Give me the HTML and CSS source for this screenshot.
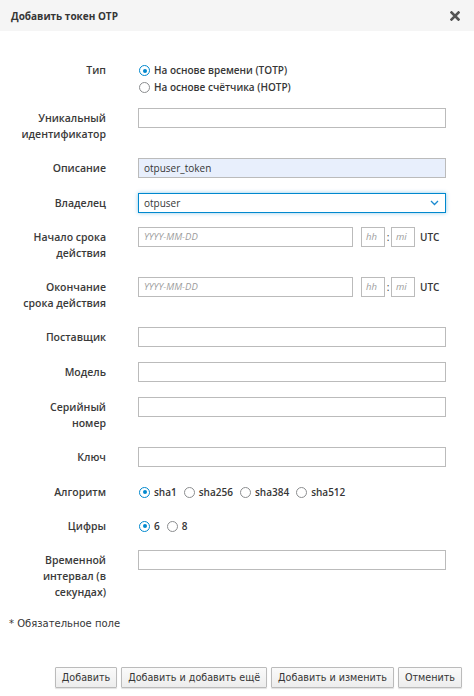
FILE: index.html
```html
<!DOCTYPE html>
<html lang="ru">
<head>
<meta charset="utf-8">
<title>Добавить токен OTP</title>
<link rel="stylesheet" href="styles.css">
</head>
<body>
<div class="dialog">
  <div class="header">
    <span class="title">Добавить токен OTP</span>
    <svg class="close" width="10" height="10" viewBox="0 0 10 10"><path d="M1.5 1.5 L8.5 8.5 M8.5 1.5 L1.5 8.5" stroke="#555" stroke-width="2.6" stroke-linecap="square"/></svg>
  </div>
  <div class="form">
    <div class="row row-type">
      <div class="label">Тип</div>
      <div class="radios-stack">
        <div class="radio-item"><span class="radio checked"></span>На основе времени (TOTP)</div>
        <div class="radio-item"><span class="radio"></span>На основе счётчика (HOTP)</div>
      </div>
    </div>
    <div class="row">
      <div class="label">Уникальный<br>идентификатор</div>
      <div class="control"><div class="input"></div></div>
    </div>
    <div class="row">
      <div class="label">Описание</div>
      <div class="control"><div class="input filled">otpuser_token</div></div>
    </div>
    <div class="row row-tight">
      <div class="label">Владелец</div>
      <div class="control">
        <div class="input select">otpuser
          <svg class="chev" width="9" height="6" viewBox="0 0 9 6"><path d="M1 1 L4.5 4.5 L8 1" fill="none" stroke="#1a8ad0" stroke-width="1.3"/></svg>
        </div>
      </div>
    </div>
    <div class="row">
      <div class="label">Начало срока<br>действия</div>
      <div class="control date-row">
        <div class="input date placeholder">YYYY-MM-DD</div>
        <div class="input time placeholder">hh</div>
        <span class="colon">:</span>
        <div class="input time placeholder">mi</div>
        <span class="utc">UTC</span>
      </div>
    </div>
    <div class="row">
      <div class="label">Окончание<br>срока действия</div>
      <div class="control date-row">
        <div class="input date placeholder">YYYY-MM-DD</div>
        <div class="input time placeholder">hh</div>
        <span class="colon">:</span>
        <div class="input time placeholder">mi</div>
        <span class="utc">UTC</span>
      </div>
    </div>
    <div class="row">
      <div class="label">Поставщик</div>
      <div class="control"><div class="input"></div></div>
    </div>
    <div class="row">
      <div class="label">Модель</div>
      <div class="control"><div class="input"></div></div>
    </div>
    <div class="row">
      <div class="label">Серийный<br>номер</div>
      <div class="control"><div class="input"></div></div>
    </div>
    <div class="row">
      <div class="label">Ключ</div>
      <div class="control"><div class="input"></div></div>
    </div>
    <div class="row row-tight">
      <div class="label">Алгоритм</div>
      <div class="radios-inline">
        <div class="radio-item"><span class="radio checked"></span>sha1</div>
        <div class="radio-item"><span class="radio"></span>sha256</div>
        <div class="radio-item"><span class="radio"></span>sha384</div>
        <div class="radio-item"><span class="radio"></span>sha512</div>
      </div>
    </div>
    <div class="row row-tight">
      <div class="label">Цифры</div>
      <div class="radios-inline">
        <div class="radio-item"><span class="radio checked"></span>6</div>
        <div class="radio-item"><span class="radio"></span>8</div>
      </div>
    </div>
    <div class="row row-last">
      <div class="label">Временной<br>интервал (в<br>секундах)</div>
      <div class="control"><div class="input"></div></div>
    </div>
  </div>
  <div class="required">* Обязательное поле</div>
  <div class="buttons">
    <button class="btn">Добавить</button>
    <button class="btn">Добавить и добавить ещё</button>
    <button class="btn">Добавить и изменить</button>
    <button class="btn">Отменить</button>
  </div>
</div>
</body>
</html>
```

FILE: styles.css
```css
html, body {
  margin: 0;
  padding: 0;
  background: #fff;
}

body {
  font-family: "Open Sans", "DejaVu Sans", sans-serif;
  color: #363636;
  width: 474px;
  height: 696px;
  overflow: hidden;
}

.header {
  height: 31px;
  background: #f5f5f5;
  display: flex;
  align-items: center;
  justify-content: space-between;
  padding: 0 14px 0 11px;
}

.title {
  font-weight: 700;
  font-size: 10px;
  color: #363636;
  margin-top: 1px;
}

.close {
  display: block;
  margin-top: 1px;
}

.form {
  padding-top: 29px;
}

.row {
  display: grid;
  grid-template-columns: 106px 308px;
  column-gap: 32px;
  margin-bottom: 15px;
  align-items: start;
}

.row-type {
  margin-bottom: 12px;
}

.row-tight {
  margin-bottom: 14px;
}

.row-last {
  margin-bottom: 0;
}

.label {
  text-align: right;
  font-weight: 600;
  font-size: 10.5px;
  line-height: 16px;
  padding-top: 2px;
  padding-bottom: 1px;
  white-space: nowrap;
  color: #3a3a3a;
}

.control {
  min-width: 0;
}

.input {
  box-sizing: border-box;
  height: 20px;
  border: 1px solid #bbb;
  background: #fff;
  font-size: 10px;
  line-height: 18px;
  padding: 0 5px;
  color: #363636;
}

.input.filled {
  background: #e8effc;
}

.input.select {
  position: relative;
  border-color: #0088ce;
  box-shadow: 0 0 4px rgba(0, 136, 206, 0.45);
}

.chev {
  position: absolute;
  right: 6px;
  top: 6px;
}

.date-row {
  display: flex;
  align-items: center;
}

.input.date {
  width: 215px;
  margin-right: 8px;
}

.input.time {
  width: 24px;
  padding: 0 4px;
}

.placeholder {
  color: #9c9c9c;
  font-style: italic;
  font-size: 9.5px;
}

.colon {
  font-size: 10px;
  width: 6px;
  text-align: center;
}

.utc {
  font-weight: 600;
  font-size: 10px;
  margin-left: 5px;
}

.radios-stack {
  padding-top: 2px;
}

.radio-item {
  display: flex;
  align-items: center;
  font-weight: 600;
  font-size: 10px;
  line-height: 17px;
}

.radios-inline {
  display: flex;
  align-items: center;
  height: 20px;
}

.radios-inline .radio-item {
  margin-right: 6px;
}

.radio {
  box-sizing: border-box;
  width: 11px;
  height: 11px;
  border-radius: 50%;
  border: 1px solid #8b8d8f;
  background: #fff;
  margin-left: 1px;
  margin-right: 4px;
  position: relative;
  flex: none;
}

.radio.checked {
  border-color: #0088ce;
}

.radio.checked::after {
  content: "";
  position: absolute;
  left: 2.5px;
  top: 2.5px;
  width: 4px;
  height: 4px;
  border-radius: 50%;
  background: #0088ce;
}

.required {
  padding-left: 9px;
  margin-top: 15px;
  font-family: "DejaVu Sans", sans-serif;
  font-size: 10px;
  line-height: 16px;
  color: #363636;
}

.buttons {
  display: flex;
  justify-content: flex-end;
  gap: 4px;
  padding-right: 12px;
  margin-top: 35px;
}

.btn {
  box-sizing: border-box;
  height: 21px;
  padding: 0 6px;
  border: 1px solid #bbb;
  background: linear-gradient(#fafafa, #ededed);
  box-shadow: 0 1px 1px rgba(0, 0, 0, 0.12);
  font-family: "DejaVu Sans", sans-serif;
  font-size: 9.6px;
  color: #363636;
  border-radius: 1px;
}
```
